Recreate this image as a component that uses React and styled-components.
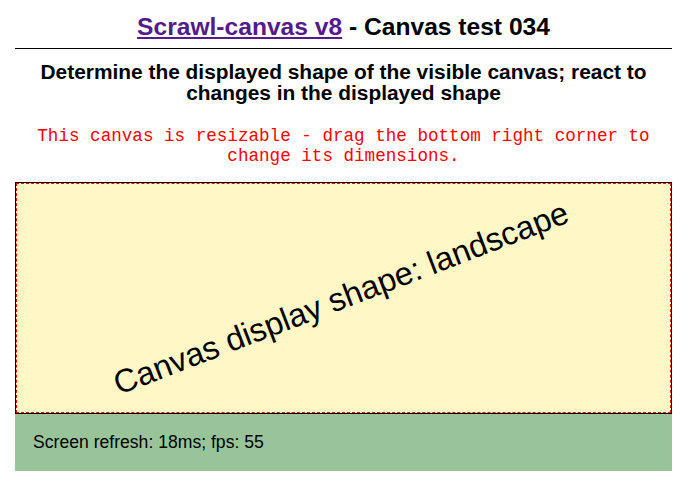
import React from "react";
import styled, { createGlobalStyle } from "styled-components";

const Global = createGlobalStyle`
  html, body { margin: 0; padding: 0; background: #fff; }
  body { font-family: "Liberation Sans", Arial, Helvetica, sans-serif; color: #000; }
`;

const Page = styled.div`
  padding: 0 15px;
`;

const Title = styled.h1`
  margin: 0;
  padding-top: 13px;
  font-size: 24.6px;
  line-height: 28px;
  font-weight: bold;
  text-align: center;
  padding-bottom: 7px;
  border-bottom: 1px solid #000;
  a { color: #551a8b; text-decoration: underline; }
`;

const Subtitle = styled.h2`
  margin: 12px 0 0;
  font-size: 20.9px;
  line-height: 21px;
  font-weight: bold;
  text-align: center;
`;

const Note = styled.p`
  margin: 23px 0 0;
  font-family: "Liberation Mono", "Courier New", monospace;
  font-size: 17.6px;
  line-height: 20px;
  color: #ff0000;
  text-align: center;
`;

const CanvasBox = styled.div`
  margin-top: 16px;
  height: 230px;
  border: 1px solid #000;
  outline: 1px dashed #ff0000;
  outline-offset: -2px;
  background: #fff8c6;
  display: flex;
  align-items: center;
  justify-content: center;
  overflow: hidden;
`;

const Rotated = styled.div`
  font-size: 32.5px;
  white-space: nowrap;
  color: #000;
  transform: translate(-2px, 0px) rotate(-21deg);
`;

const Stats = styled.div`
  background: #99c49a;
  height: 57px;
  padding-left: 18px;
  display: flex;
  align-items: center;
  font-size: 17.6px;
`;

export default function App() {
  return (
    <>
      <Global />
      <Page>
        <Title>
          <a href="#">Scrawl-canvas v8</a> - Canvas test 034
        </Title>
        <Subtitle>
          Determine the displayed shape of the visible canvas; react to changes in the displayed shape
        </Subtitle>
        <Note>
          This canvas is resizable - drag the bottom right corner to change its dimensions.
        </Note>
        <CanvasBox>
          <Rotated>Canvas display shape: landscape</Rotated>
        </CanvasBox>
        <Stats>Screen refresh: 18ms; fps: 55</Stats>
      </Page>
    </>
  );
}
